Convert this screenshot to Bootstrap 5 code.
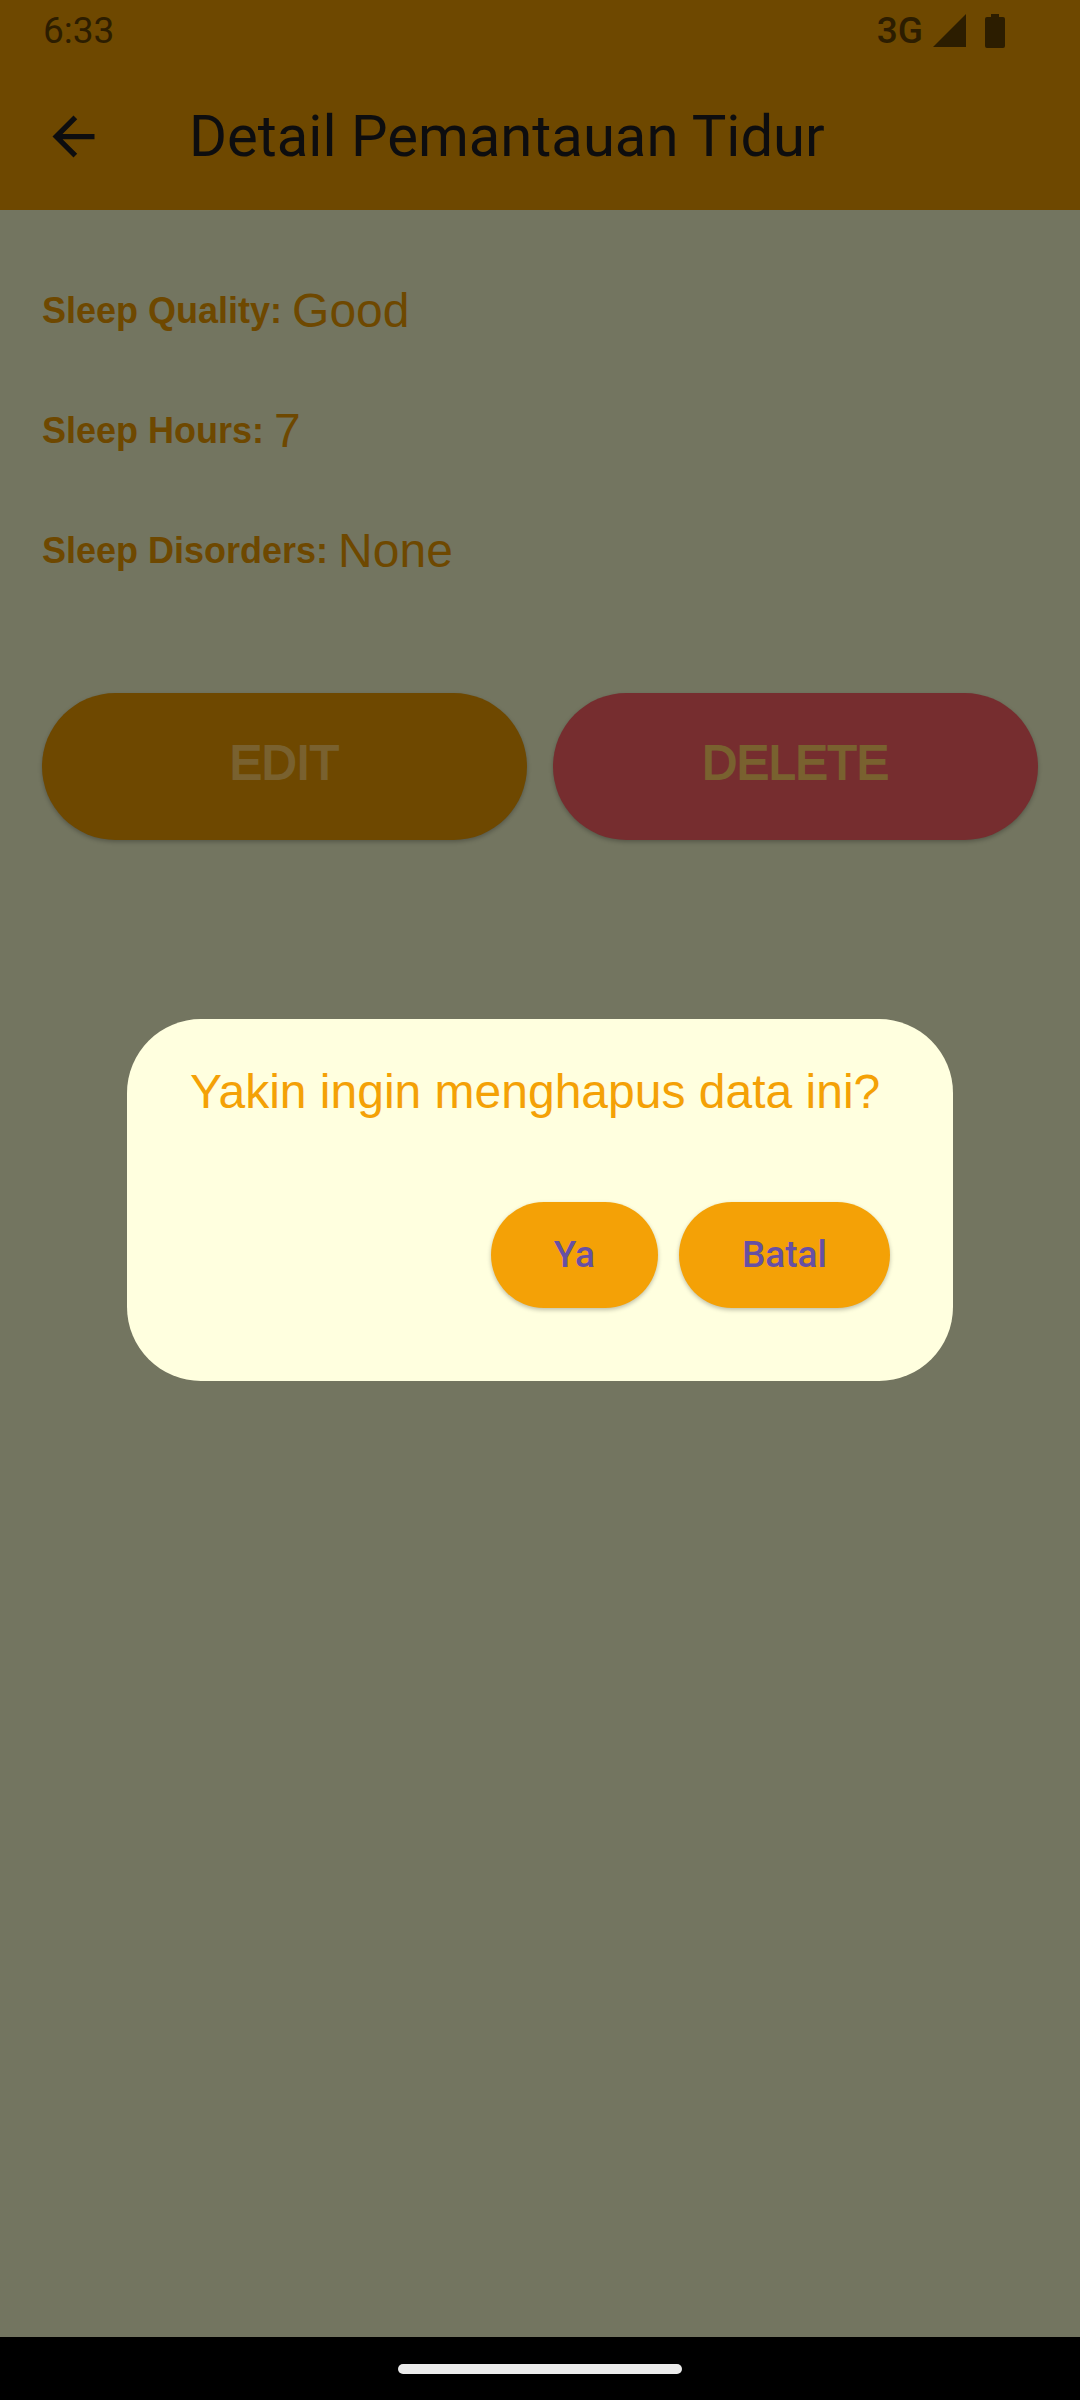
<!DOCTYPE html>
<html lang="id">
<head>
<meta charset="utf-8">
<meta name="viewport" content="width=device-width, initial-scale=1">
<title>Detail Pemantauan Tidur</title>
<link href="https://cdn.jsdelivr.net/npm/bootstrap@5.3.0/dist/css/bootstrap.min.css" rel="stylesheet">
<style>
  body { background: #737560; font-family: "Liberation Sans", Arial, sans-serif; color: #6e4800; }
  .app-top { background: #6e4800; font-family: Roboto, sans-serif; }
  .status-row { height: 62px; padding: 0 65px 0 43px; font-size: 37px; line-height: 62px; color: #2c1d00; }
  .status-net { font-weight: 500; }
  .title-row { height: 148px; padding: 0 42px; gap: 84px; color: #0d0d0f; }
  .app-title { font-size: 58px; line-height: 68px; font-weight: 400; }
  .app-title, .detail-list, .dialog-text { margin: 0; }
  .back-link { width: 63px; height: 63px; color: inherit; }
  .app-main { padding: 71px 42px; }
  .detail-item { height: 60px; margin-bottom: 60px; gap: 10px; }
  .detail-item dt { font-size: 36px; line-height: 60px; font-weight: 700; }
  .detail-item dd { font-size: 48px; line-height: 60px; margin: 0; }
  .action-row { gap: 26px; padding-top: 52px; }
  .btn-app { height: 147px; border: 0; border-radius: 74px; font-size: 48px; line-height: 56px; padding: 0 24px 8px; box-shadow: 0 2px 4px rgba(0,0,0,.25); -webkit-text-stroke: 2px currentColor; }
  .btn-edit, .btn-edit:hover { background: #6e4800; color: #79612f; }
  .btn-del, .btn-del:hover { background: #762d2f; color: #79612f; }
  .dialog-frame { max-width: 826px; }
  .dialog-box { background: #ffffdf; border: 0; border-radius: 74px; padding: 42px 63px 73px; gap: 79px; }
  .dialog-text { font-size: 48px; line-height: 62px; font-weight: 400; color: #f4a106; }
  .dialog-actions { gap: 21px; }
  .btn-dialog, .btn-dialog:hover { height: 106px; border: 0; border-radius: 53px; padding: 0 63px; background: #f4a106; color: #6750a4; font: 500 37px/48px Roboto, sans-serif; box-shadow: 0 2px 4px rgba(0,0,0,.25); }
  .gesture-bar { height: 63px; background: #000; }
  .gesture-pill { width: 284px; height: 10px; background: #ebebeb; }
</style>
</head>
<body>
<div class="d-flex flex-column min-vh-100">
  <header class="app-top">
    <div class="status-row d-flex justify-content-between">
      <span>6:33</span>
      <div class="d-flex">
        <span class="status-net">3G</span>
        <svg class="ms-2" width="84" height="62" viewBox="0 0 84 62" fill="currentColor" aria-hidden="true">
          <path d="M2 47 35 14V47z"/>
          <path d="M60 14h8v3h4a2 2 0 0 1 2 2v27a2 2 0 0 1-2 2H56a2 2 0 0 1-2-2V19a2 2 0 0 1 2-2h4z"/>
        </svg>
      </div>
    </div>
    <div class="title-row d-flex align-items-center">
      <a class="back-link flex-shrink-0" href="#" aria-label="Kembali">
        <svg class="d-block" width="63" height="63" viewBox="0 0 24 24" fill="currentColor" aria-hidden="true"><path d="M20 11H7.83l5.59-5.59L12 4l-8 8 8 8 1.41-1.41L7.83 13H20z"/></svg>
      </a>
      <h1 class="app-title">Detail Pemantauan Tidur</h1>
    </div>
  </header>

  <main class="app-main flex-grow-1">
    <dl class="detail-list">
      <div class="detail-item d-flex align-items-center"><dt>Sleep Quality:</dt><dd>Good</dd></div>
      <div class="detail-item d-flex align-items-center"><dt>Sleep Hours:</dt><dd>7</dd></div>
      <div class="detail-item d-flex align-items-center"><dt>Sleep Disorders:</dt><dd>None</dd></div>
    </dl>
    <div class="action-row d-flex">
      <button type="button" class="btn btn-app btn-edit flex-fill w-50">EDIT</button>
      <button type="button" class="btn btn-app btn-del flex-fill w-50">DELETE</button>
    </div>
  </main>

  <footer class="gesture-bar d-flex align-items-center justify-content-center">
    <div class="gesture-pill rounded-pill"></div>
  </footer>
</div>

<div class="modal d-block" role="dialog" aria-modal="true" aria-labelledby="confirmText">
  <div class="modal-dialog modal-dialog-centered dialog-frame">
    <div class="modal-content dialog-box">
      <h2 class="dialog-text" id="confirmText">Yakin ingin menghapus data ini?</h2>
      <div class="dialog-actions d-flex justify-content-end">
        <button type="button" class="btn btn-dialog">Ya</button>
        <button type="button" class="btn btn-dialog">Batal</button>
      </div>
    </div>
  </div>
</div>
<script src="https://cdn.jsdelivr.net/npm/bootstrap@5.3.0/dist/js/bootstrap.bundle.min.js"></script>
</body>
</html>
